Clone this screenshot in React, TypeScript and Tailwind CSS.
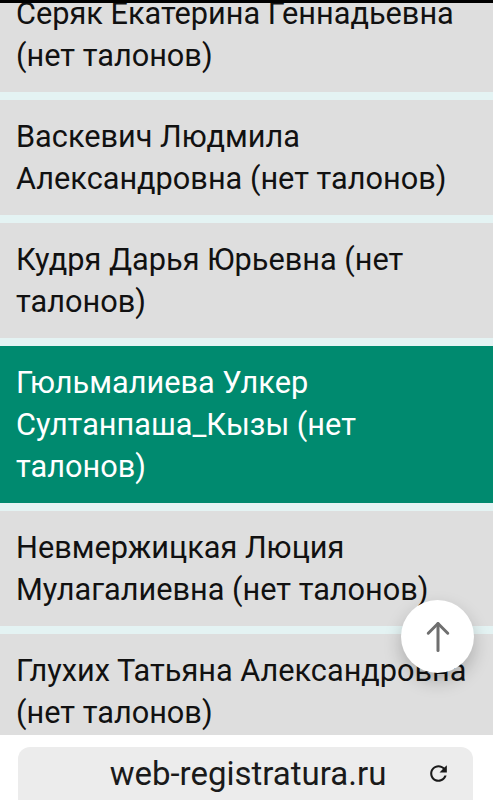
import React from 'react';

const doctors = [
  { id: 1, name: 'Серяк Екатерина Геннадьевна (нет талонов)' },
  { id: 2, name: 'Васкевич Людмила Александровна (нет талонов)' },
  { id: 3, name: 'Кудря Дарья Юрьевна (нет талонов)' },
  { id: 4, name: 'Гюльмалиева Улкер Султанпаша_Кызы (нет талонов)', active: true },
  { id: 5, name: 'Невмержицкая Люция Мулагалиевна (нет талонов)' },
  { id: 6, name: 'Глухих Татьяна Александровна (нет талонов)' },
  { id: 7, name: 'Иванова Ольга Петровна (нет талонов)' },
];

const App: React.FC = () => {
  return (
    <div className="relative h-[800px] w-full flex flex-col overflow-hidden bg-[#e4f3f3]" style={{ fontFamily: 'Roboto, "Noto Sans", sans-serif' }}>
      {/* status bar edge */}
      <div className="h-[3px] bg-black shrink-0" />

      {/* doctors list */}
      <div className="flex-1 overflow-hidden">
        <div className="-mt-[26px] flex flex-col gap-2">
          {doctors.map(d => (
            <div
              key={d.id}
              className={`px-4 pt-4 pb-[15px] text-[30.7px] leading-[42px] ${d.active ? 'bg-[#008a6f] text-white' : 'bg-[#dedede] text-[#111]'}`}
            >
              {d.name}
            </div>
          ))}
        </div>
      </div>

      {/* browser address bar */}
      <div className="h-[65px] bg-white shrink-0 pt-3 pl-[18px] pr-5">
        <div className="h-full rounded-t-xl bg-[#ececec] flex items-center">
          <div className="flex-1 text-center pl-[72px] text-[33px] leading-none text-[#1a1a1a]">web-registratura.ru</div>
          <svg width="25" height="25" viewBox="0 0 24 24" className="mr-[22px] ml-5 text-[#1a1a1a]">
            <path
              fill="currentColor"
              d="M17.65 6.35C16.2 4.9 14.21 4 12 4c-4.42 0-7.99 3.58-7.99 8s3.57 8 7.99 8c3.73 0 6.84-2.55 7.73-6h-2.08c-.82 2.33-3.04 4-5.65 4-3.31 0-6-2.69-6-6s2.690-6 6-6c1.66 0 3.14.69 4.220 1.78L13 11h7V4l-2.35 2.35z"
            />
          </svg>
        </div>
      </div>

      {/* scroll to top */}
      <button className="absolute left-[401px] top-[600px] w-[73px] h-[73px] rounded-full bg-white shadow-[0_8px_18px_rgba(0,0,0,0.22)] flex items-center justify-center">
        <svg width="36" height="36" viewBox="0 0 24 24" fill="none" stroke="#6f6f6f" strokeWidth="2" strokeLinecap="round" strokeLinejoin="round">
          <path d="M12 3v18" />
          <path d="M5.5 9.5 12 3l6.5 6.5" />
        </svg>
      </button>
    </div>
  );
};

export default App;
